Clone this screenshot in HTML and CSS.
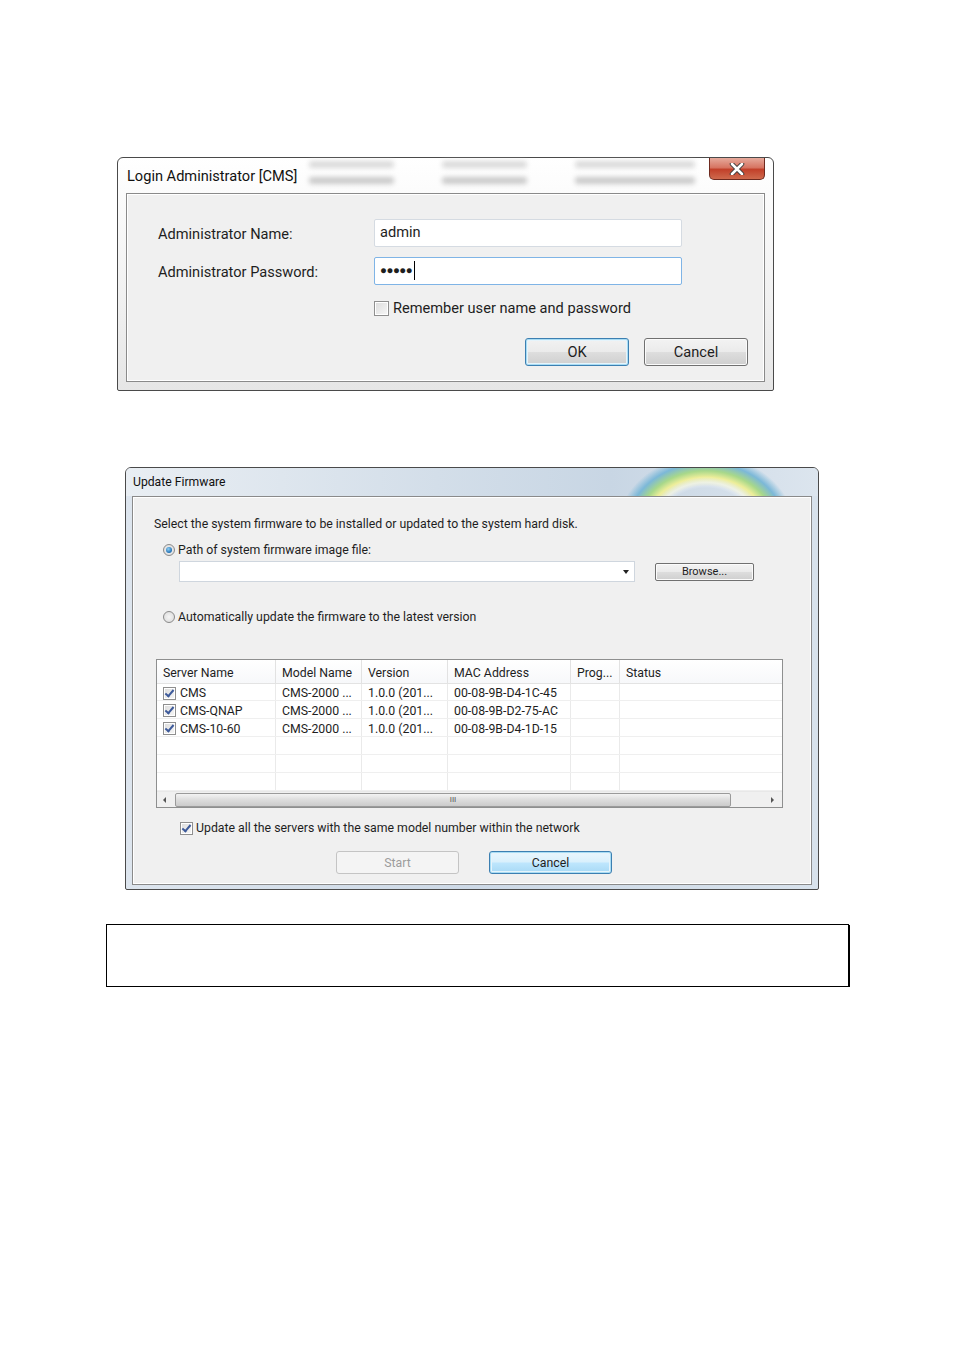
FILE: index.html
```html
<!DOCTYPE html>
<html lang="en">
<head>
    <meta charset="UTF-8">
    <title>Login Administrator / Update Firmware</title>
    <link rel="stylesheet" href="styles.css">
</head>
<body>
    <div class="page">

        <!-- login dialog -->
        <div class="win login">
            <div class="titlebar">
                <span class="title">Login Administrator [CMS]</span>
                <div class="ghost">
                    <div class="gcol"><span class="g1"></span><span class="g1"></span></div>
                    <div class="gcol"><span class="g2"></span><span class="g2"></span></div>
                    <div class="gcol"><span class="g3"></span><span class="g3"></span></div>
                </div>
                <div class="close">
                    <svg width="18" height="12" viewBox="0 0 18 12">
                        <path d="M4 1 L14 11 M14 1 L4 11" stroke="#3a3a3a" stroke-width="4.5" stroke-linecap="round"/>
                        <path d="M4 1 L14 11 M14 1 L4 11" stroke="#fff" stroke-width="2.6" stroke-linecap="round"/>
                    </svg>
                </div>
            </div>
            <div class="client login-client">
                <div class="login-form">
                    <label class="lbl">Administrator Name:</label>
                    <div class="textbox">admin</div>
                    <label class="lbl">Administrator Password:</label>
                    <div class="textbox focus"><span class="dots">&#9679;&#9679;&#9679;&#9679;&#9679;</span><span class="caret"></span></div>
                    <span></span>
                    <div class="check-row">
                        <span class="checkbox big"></span>
                        <span>Remember user name and password</span>
                    </div>
                </div>
                <div class="login-buttons">
                    <button class="btn default">OK</button>
                    <button class="btn">Cancel</button>
                </div>
            </div>
        </div>

        <!-- firmware dialog -->
        <div class="win fw">
            <div class="titlebar fw-title">
                <span class="title">Update Firmware</span>
            </div>
            <div class="client fw-client">
                <p class="intro">Select the system firmware to be installed or updated to the system hard disk.</p>
                <div class="radio-row">
                    <span class="radio on"></span>
                    <span>Path of system firmware image file:</span>
                </div>
                <div class="path-row">
                    <div class="combo"><span class="arrow"></span></div>
                    <button class="btn small">Browse...</button>
                </div>
                <div class="radio-row auto">
                    <span class="radio"></span>
                    <span>Automatically update the firmware to the latest version</span>
                </div>

                <div class="list">
                    <div class="grid head">
                        <div>Server Name</div>
                        <div>Model Name</div>
                        <div>Version</div>
                        <div>MAC Address</div>
                        <div>Prog...</div>
                        <div>Status</div>
                    </div>
                    <div class="grid row">
                        <div><span class="checkbox on"></span>CMS</div>
                        <div>CMS-2000 ...</div>
                        <div>1.0.0 (201...</div>
                        <div>00-08-9B-D4-1C-45</div>
                        <div></div>
                        <div></div>
                    </div>
                    <div class="grid row">
                        <div><span class="checkbox on"></span>CMS-QNAP</div>
                        <div>CMS-2000 ...</div>
                        <div>1.0.0 (201...</div>
                        <div>00-08-9B-D2-75-AC</div>
                        <div></div>
                        <div></div>
                    </div>
                    <div class="grid row">
                        <div><span class="checkbox on"></span>CMS-10-60</div>
                        <div>CMS-2000 ...</div>
                        <div>1.0.0 (201...</div>
                        <div>00-08-9B-D4-1D-15</div>
                        <div></div>
                        <div></div>
                    </div>
                    <div class="grid row"><div></div><div></div><div></div><div></div><div></div><div></div></div>
                    <div class="grid row"><div></div><div></div><div></div><div></div><div></div><div></div></div>
                    <div class="grid row"><div></div><div></div><div></div><div></div><div></div><div></div></div>
                    <div class="hscroll">
                        <span class="sarrow left"></span>
                        <div class="thumb">III</div>
                        <span class="sarrow right"></span>
                    </div>
                </div>

                <div class="check-row all">
                    <span class="checkbox on"></span>
                    <span>Update all the servers with the same model number within the network</span>
                </div>
                <div class="fw-buttons">
                    <button class="btn wide disabled">Start</button>
                    <button class="btn wide default">Cancel</button>
                </div>
            </div>
        </div>

        <div class="note-box"></div>
    </div>
</body>
</html>
```

FILE: styles.css
```css
body {
    margin: 0;
    background: #fff;
    font-family: Roboto, "Liberation Sans", sans-serif;
    color: #1e1e1e;
}

.page {
    display: flex;
    flex-direction: column;
    align-items: flex-start;
    padding-top: 157px;
}

/* window frames */
.win {
    box-sizing: border-box;
    border: 1px solid #4a4a4a;
    border-radius: 6px 6px 2px 2px;
}

.login {
    margin-left: 117px;
    width: 657px;
    height: 234px;
    padding: 0 8px 8px 8px;
    background: linear-gradient(to bottom, #ffffff, #f1f1f1 60%, #e6e6e6);
}

.fw {
    margin-left: 125px;
    margin-top: 76px;
    width: 694px;
    height: 423px;
    padding: 0 6px 6px 6px;
    background: linear-gradient(to right, #dde5ee, #cdd9e6 50%, #d8e2ec);
}

.titlebar {
    display: flex;
    align-items: center;
    position: relative;
}

.login .titlebar {
    height: 35px;
}

.title {
    font-size: 14.6px;
    color: #111;
    white-space: nowrap;
}

.login .title {
    padding-left: 1px;
}

.ghost {
    display: flex;
    gap: 48px;
    margin-left: 12px;
    filter: blur(2.6px);
}

.gcol {
    display: flex;
    flex-direction: column;
    gap: 9px;
    margin-top: -6px;
}

.gcol span {
    height: 7px;
    background: #dadada;
    border-radius: 3px;
}

.gcol span:last-child {
    background: #c9c9c9;
}

.g1 { width: 85px; }
.g2 { width: 85px; }
.g3 { width: 120px; }

.close {
    position: absolute;
    right: 0;
    top: 0;
    width: 56px;
    height: 22px;
    box-sizing: border-box;
    border: 1px solid #6e2a1f;
    border-top: none;
    border-radius: 0 0 5px 5px;
    background: linear-gradient(to bottom, #e6aa9c, #d77563 45%, #c2402a 55%, #cf6a4d);
    display: flex;
    justify-content: center;
    align-items: center;
}

.fw-title {
    height: 28px;
    margin: 0 -6px;
    padding-left: 7px;
    border-radius: 5px 5px 0 0;
    background:
        radial-gradient(ellipse 80px 70px at 580px 62px, transparent 60%, rgba(255,255,255,0.5) 68%, transparent 76%),
        radial-gradient(ellipse 95px 80px at 580px 62px, transparent 55%, #eeee9a 66%, #a8d88a 74%, #7cb8d8 84%, transparent 94%),
        linear-gradient(to right, #e9eef3, #d3dee9 45%, #c8d6e4 70%, #dce5ee);
}

.fw-title .title {
    font-size: 12.2px;
}

/* client area */
.client {
    box-sizing: border-box;
    background: #f0f0f0;
    border: 1px solid #8a8a8a;
    box-shadow: inset 0 0 0 1px #ffffff;
}

.login-client {
    height: 189px;
    padding: 25px 16px 0 31px;
    font-size: 14.6px;
}

.login-form {
    display: grid;
    grid-template-columns: 216px 308px;
    row-gap: 10px;
    align-items: center;
}

.lbl {
    color: #1e1e1e;
    padding-top: 2px;
}

.textbox {
    box-sizing: border-box;
    height: 28px;
    background: #fff;
    border: 1px solid #d5dbe2;
    border-radius: 2px;
    padding: 3px 0 0 5px;
    display: flex;
    align-items: flex-start;
}

.textbox.focus {
    border-color: #7fb4e6;
    padding-top: 3px;
}

.dots {
    font-size: 11.5px;
    letter-spacing: -0.5px;
    line-height: 19px;
}

.caret {
    width: 1px;
    height: 19px;
    background: #000;
    margin-left: 2px;
}

.check-row {
    display: flex;
    align-items: center;
    gap: 4px;
}

.login .check-row {
    margin-top: 4px;
}

.checkbox {
    box-sizing: border-box;
    width: 13px;
    height: 13px;
    border: 1px solid #8f8f8f;
    background: linear-gradient(135deg, #dcdcdc, #f7f7f7);
    box-shadow: inset 0 0 0 1px #fff;
    position: relative;
    flex: none;
}

.checkbox.big {
    width: 15px;
    height: 15px;
}

.checkbox.on::after {
    content: "";
    position: absolute;
    left: 3px;
    top: 0px;
    width: 3px;
    height: 7px;
    border: solid #3d5a9a;
    border-width: 0 2px 2px 0;
    transform: rotate(40deg);
}

.login-buttons {
    display: flex;
    justify-content: flex-end;
    gap: 15px;
    margin-top: 21px;
}

.btn {
    box-sizing: border-box;
    width: 104px;
    height: 28px;
    font-family: inherit;
    font-size: 14.6px;
    color: #1e1e1e;
    border: 1px solid #707070;
    border-radius: 3px;
    background: linear-gradient(to bottom, #f3f3f3, #ebebeb 48%, #dddddd 52%, #cfcfcf);
    box-shadow: inset 0 0 0 1px #fbfbfb;
    padding: 0;
}

.btn.default {
    border-color: #3c7fb1;
    box-shadow: inset 0 0 0 1px #a8dcf4, inset 0 0 0 2px #e6f4fb;
    background: linear-gradient(to bottom, #eaf6fd, #d9f0fc 48%, #bee6fd 52%, #a7d9f5);
}

.login .btn.default {
    background: linear-gradient(to bottom, #f2f2f2, #ebebeb 48%, #dddddd 52%, #cfcfcf);
}

/* firmware dialog */
.fw-client {
    height: 389px;
    padding: 13px 0 0 21px;
    font-size: 12.3px;
}

.intro {
    margin: 7px 0 0 0;
}

.radio-row {
    display: flex;
    align-items: center;
    gap: 3px;
    margin-left: 9px;
    margin-top: 12px;
}

.radio-row.auto {
    margin-top: 28px;
}

.radio {
    box-sizing: border-box;
    width: 12px;
    height: 12px;
    border-radius: 50%;
    border: 1px solid #8a8a8a;
    background: radial-gradient(circle, #f5f5f5, #d8d8d8);
    position: relative;
}

.radio.on::after {
    content: "";
    position: absolute;
    left: 2px;
    top: 2px;
    width: 6px;
    height: 6px;
    border-radius: 50%;
    background: radial-gradient(circle at 40% 35%, #8fd0f5, #1f6fb3 70%);
}

.path-row {
    display: flex;
    align-items: center;
    margin-top: 4px;
    margin-left: 25px;
}

.combo {
    box-sizing: border-box;
    width: 456px;
    height: 21px;
    background: #fff;
    border: 1px solid #cfd6de;
    position: relative;
}

.arrow {
    position: absolute;
    right: 5px;
    top: 8px;
    border-left: 3px solid transparent;
    border-right: 3px solid transparent;
    border-top: 4px solid #222;
}

.btn.small {
    width: 99px;
    height: 18px;
    font-size: 11px;
    margin-left: 20px;
    border-radius: 2px;
}

.list {
    box-sizing: border-box;
    width: 627px;
    height: 149px;
    margin-top: 35px;
    margin-left: 2px;
    background: #fff;
    border: 1px solid #8e8f8f;
    display: flex;
    flex-direction: column;
}

.grid {
    display: grid;
    grid-template-columns: 119px 86px 86px 123px 49px 1fr;
}

.grid > div {
    display: flex;
    align-items: center;
    padding-left: 6px;
    border-right: 1px solid #eaeaea;
    white-space: nowrap;
}

.grid > div:last-child {
    border-right: none;
}

.head {
    height: 24px;
    border-bottom: 1px solid #e3e3e3;
    background: linear-gradient(to bottom, #ffffff, #f7f8fa);
}

.head > div {
    border-right-color: #e2e2e2;
    padding-top: 4px;
}

.row {
    height: 18px;
    border-bottom: 1px solid #efefef;
}

.row > div {
    padding-top: 2px;
}

.row > div:first-child {
    gap: 4px;
}

.hscroll {
    display: flex;
    align-items: center;
    height: 16px;
    margin-top: auto;
    background: #f0f0f0;
    border-top: 1px solid #e8e8e8;
}

.sarrow {
    width: 0;
    height: 0;
    border-top: 3px solid transparent;
    border-bottom: 3px solid transparent;
}

.sarrow.left {
    border-right: 3px solid #555;
    margin: 0 9px 0 6px;
}

.sarrow.right {
    border-left: 3px solid #555;
    margin-left: auto;
    margin-right: 8px;
}

.thumb {
    box-sizing: border-box;
    width: 556px;
    height: 14px;
    border: 1px solid #9a9a9a;
    border-radius: 2px;
    background: linear-gradient(to bottom, #f3f3f3, #dcdcdc 50%, #cbcbcb);
    font-size: 8px;
    line-height: 12px;
    text-align: center;
    color: #555;
}

.check-row.all {
    margin-top: 13px;
    margin-left: 26px;
    gap: 3px;
}

.fw-buttons {
    display: flex;
    gap: 30px;
    margin-top: 16px;
    margin-left: 182px;
}

.btn.wide {
    width: 123px;
    height: 23px;
    font-size: 12.3px;
}

.btn.disabled {
    color: #9c9c9c;
    border-color: #c4c4c4;
    background: #f4f4f4;
    box-shadow: none;
}

.note-box {
    margin-left: 106px;
    margin-top: 34px;
    width: 743px;
    height: 63px;
    box-sizing: border-box;
    border: 1px solid #000;
    box-shadow: 1px 1px 0 #000;
}
```
